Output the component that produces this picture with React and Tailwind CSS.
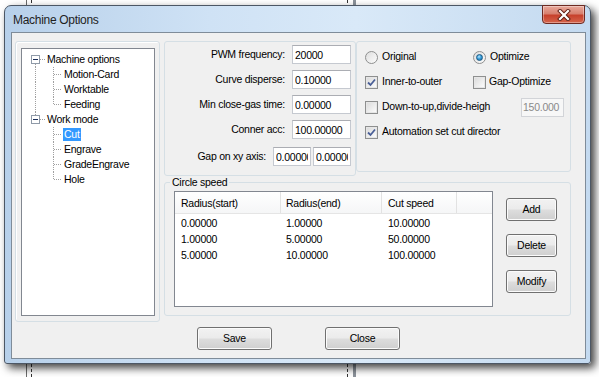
import React from "react";

const tree = [
  { label: "Machine options", root: true, first: true },
  { label: "Motion-Card", cont: true },
  { label: "Worktable", cont: true },
  { label: "Feeding", cont: true, last: true },
  { label: "Work mode", root: true },
  { label: "Cut", selected: true },
  { label: "Engrave" },
  { label: "GradeEngrave" },
  { label: "Hole", last: true },
];

const rows = [
  ["0.00000", "1.00000", "10.00000"],
  ["1.00000", "5.00000", "50.00000"],
  ["5.00000", "10.00000", "100.00000"],
];

const dot = { stroke: "#a0a0a0", strokeDasharray: "1 1", shapeRendering: "crispEdges" };

function Gutter({ item }) {
  if (item.root) {
    return (
      <svg width="24" height="15" className="shrink-0">
        {item.first ? (
          <line x1="13.5" y1="12" x2="13.5" y2="15" {...dot} />
        ) : (
          <line x1="13.5" y1="0" x2="13.5" y2="3" {...dot} />
        )}
        <line x1="18" y1="7.5" x2="23" y2="7.5" {...dot} />
        <rect x="9.5" y="3.5" width="8" height="8" fill="#fff" stroke="#8f9aa8" shapeRendering="crispEdges" />
        <line x1="11" y1="7.5" x2="16" y2="7.5" stroke="#1c2f5a" shapeRendering="crispEdges" />
      </svg>
    );
  }
  return (
    <svg width="41" height="15" className="shrink-0">
      {item.cont && <line x1="13.5" y1="0" x2="13.5" y2="15" {...dot} />}
      <line x1="31.5" y1="0" x2="31.5" y2={item.last ? 8 : 15} {...dot} />
      <line x1="32" y1="7.5" x2="40" y2="7.5" {...dot} />
    </svg>
  );
}

function WinButton({ children, className = "" }) {
  return (
    <div
      className={`flex items-center justify-center rounded-[3px] border border-[#707070] bg-[linear-gradient(to_bottom,#f2f2f2_0%,#ebebeb_48%,#dddddd_52%,#cfcfcf_100%)] shadow-[inset_0_0_0_1px_#fbfbfb] ${className}`}
    >
      {children}
    </div>
  );
}

function Check({ checked }) {
  return (
    <span className="flex h-[13px] w-[13px] shrink-0 items-center justify-center border border-[#8e8f8f] bg-white">
      <span className="flex h-[11px] w-[11px] items-center justify-center border border-[#e6e6e6] bg-[linear-gradient(135deg,#dcdcdc,#fbfbfb)]">
        {checked && (
          <svg width="9" height="9" viewBox="0 0 9 9">
            <path d="M1 4.5 L3.5 7 L8 1.5" fill="none" stroke="#4a5f97" strokeWidth="1.8" />
          </svg>
        )}
      </span>
    </span>
  );
}

function Radio({ checked }) {
  return (
    <span className="flex h-[13px] w-[13px] shrink-0 items-center justify-center rounded-full border border-[#8e8f8f] bg-[linear-gradient(135deg,#dedede,#fcfcfc)]">
      {checked && (
        <span className="h-[7px] w-[7px] rounded-full border border-[#1b5a85] bg-[radial-gradient(circle_at_40%_35%,#b9e6ff_0%,#3aa0dc_45%,#17699f_100%)]" />
      )}
    </span>
  );
}

function Field({ label, value }) {
  return (
    <div className="flex h-[19px] items-center justify-end gap-[7px]">
      <span>{label}</span>
      <input
        readOnly
        value={value}
        className="h-[19px] w-[59px] border border-[#c5c9d0] border-t-[#abadb3] bg-white px-[2px] text-[10.5px] outline-none"
      />
    </div>
  );
}

export default function App() {
  return (
    <div className="relative h-[377px] w-[599px] overflow-hidden bg-white font-['Liberation_Sans',Arial,sans-serif] text-[10.5px] tracking-[-0.25px] text-black">
      {/* desktop lines behind the dialog */}
      <div className="absolute left-[26px] top-0 h-full border-l border-[#6b6b6b]" />
      <div className="absolute left-[31px] top-0 h-full border-l border-dashed border-[#333]" />
      <div className="absolute left-[347px] top-0 h-full border-l border-dashed border-[#333]" />
      <div className="absolute left-[353px] top-0 h-full w-[3px] bg-[#8c939b]" />

      {/* window */}
      <div className="relative ml-[4px] mt-[5px] flex h-[359px] w-[587px] flex-col rounded-t-[7px] rounded-b-[3px] border border-[#4c5765] bg-[linear-gradient(to_right,#b7d0ea_0%,#cfe2f5_35%,#d9e9f8_60%,#c4daf0_100%)] shadow-[4px_4px_9px_rgba(0,0,0,0.75)]">
        {/* title bar */}
        <div className="flex h-[26px] shrink-0 items-start justify-between">
          <span className="mt-[5px] pl-[8px] text-[12px] tracking-[-0.3px] text-[#1e1e1e]">Machine Options</span>
          <div className="mr-[5px] mt-[-1px] flex h-[19px] w-[43px] items-center justify-center rounded-b-[4px] border border-[#6d2a22] bg-[linear-gradient(to_bottom,#e9a99b_0%,#d7806f_45%,#c7412c_55%,#d5654c_100%)] shadow-[inset_0_0_0_1px_rgba(255,255,255,0.35)]">
            <svg width="14" height="12" viewBox="0 0 14 12">
              <path d="M3 2 L11 10 M11 2 L3 10" stroke="#5a1b12" strokeWidth="4" strokeLinecap="square" />
              <path d="M3 2 L11 10 M11 2 L3 10" stroke="#fff" strokeWidth="2.2" strokeLinecap="square" />
            </svg>
          </div>
        </div>

        {/* client area */}
        <div className="ml-[6px] mr-[4px] flex h-[327px] flex-col border border-[#7f8c99] bg-[#f0f0f0]">
          <div className="flex gap-[4px] pl-[3px] pt-[8px]">
            {/* tree group */}
            <div className="h-[281px] w-[145px] rounded-[3px] border border-[#d5dfe5] px-[5px] pt-[6px] shadow-[inset_1px_1px_0_#fff]">
              <div className="h-[268px] w-[134px] border border-[#828790] bg-white pt-[3px]">
                {tree.map((item) => (
                  <div key={item.label} className="flex h-[15px] items-center">
                    <Gutter item={item} />
                    <span
                      className={`h-[13px] px-[1px] leading-[13px] ${item.selected ? "bg-[#3399ff] text-white" : ""}`}
                    >
                      {item.label}
                    </span>
                  </div>
                ))}
              </div>
            </div>

            {/* right side */}
            <div className="flex w-[407px] flex-col">
              <div className="flex items-start">
                <div className="flex h-[135px] w-[192px] flex-col gap-[6px] rounded-[3px] border border-[#d5dfe5] pr-[4px] pt-[3px]">
                  <Field label="PWM frequency:" value="20000" />
                  <Field label="Curve disperse:" value="0.10000" />
                  <Field label="Min close-gas time:" value="0.00000" />
                  <Field label="Conner acc:" value="100.00000" />
                  <div className="mt-[2px] flex h-[19px] items-center justify-end">
                    <span className="mr-[7px]">Gap on xy axis:</span>
                    <input
                      readOnly
                      value="0.00000"
                      className="mr-[2px] h-[19px] w-[38px] border border-[#c5c9d0] border-t-[#abadb3] bg-white px-[2px] text-[10.5px] outline-none"
                    />
                    <input
                      readOnly
                      value="0.00000"
                      className="h-[19px] w-[38px] border border-[#c5c9d0] border-t-[#abadb3] bg-white px-[2px] text-[10.5px] outline-none"
                    />
                  </div>
                </div>

                <div className="flex h-[131px] w-[215px] flex-col gap-[5px] rounded-[3px] border border-[#d5dfe5] pl-[8px] pr-[6px] pt-[5px]">
                  <div className="flex h-[20px] items-center">
                    <span className="flex w-[108px] items-center gap-[2px]">
                      <Radio />
                      <span className="ml-[2px]">Original</span>
                    </span>
                    <span className="flex items-center gap-[2px]">
                      <Radio checked />
                      <span className="ml-[2px]">Optimize</span>
                    </span>
                  </div>
                  <div className="flex h-[20px] items-center">
                    <span className="flex w-[108px] items-center gap-[4px]">
                      <Check checked />
                      <span>Inner-to-outer</span>
                    </span>
                    <span className="flex items-center gap-[2px]">
                      <Check />
                      <span className="ml-[1px]">Gap-Optimize</span>
                    </span>
                  </div>
                  <div className="flex h-[20px] items-center justify-between">
                    <span className="flex items-center gap-[4px]">
                      <Check />
                      <span>Down-to-up,divide-heigh</span>
                    </span>
                    <input
                      readOnly
                      value="150.000"
                      className="h-[19px] w-[43px] border border-[#d2d4d8] bg-[#f7f7f7] px-[1px] text-[10.5px] text-[#8a8a8a] outline-none"
                    />
                  </div>
                  <div className="flex h-[20px] items-center gap-[4px]">
                    <Check checked />
                    <span>Automation set cut director</span>
                  </div>
                </div>
              </div>

              {/* circle speed */}
              <fieldset className="h-[140px] w-[407px] rounded-[3px] border border-[#d5dfe5]">
                <legend className="ml-[5px] px-[2px] leading-[13px]">Circle speed</legend>
                <div className="flex">
                  <div className="ml-[9px] mt-[2px] h-[116px] w-[319px] border border-[#828790] bg-white">
                    <div className="flex h-[22px] items-center border-b border-[#e5e5e5] bg-[linear-gradient(to_bottom,#ffffff,#f5f6f7)]">
                      <span className="h-full w-[106px] border-r border-[#e2e2e2] pl-[6px] leading-[22px]">Radius(start)</span>
                      <span className="h-full w-[101px] border-r border-[#e2e2e2] pl-[5px] leading-[22px]">Radius(end)</span>
                      <span className="h-full w-[75px] border-r border-[#e2e2e2] pl-[6px] leading-[22px]">Cut speed</span>
                    </div>
                    <div className="pt-[2px]">
                      {rows.map((r) => (
                        <div key={r[0]} className="flex h-[16px] items-center">
                          <span className="w-[106px] pl-[6px]">{r[0]}</span>
                          <span className="w-[101px] pl-[5px]">{r[1]}</span>
                          <span className="w-[75px] pl-[6px]">{r[2]}</span>
                        </div>
                      ))}
                    </div>
                  </div>
                  <div className="ml-[13px] mt-[9px] flex flex-col gap-[13px]">
                    <WinButton className="h-[23px] w-[51px]">Add</WinButton>
                    <WinButton className="h-[23px] w-[51px]">Delete</WinButton>
                    <WinButton className="h-[23px] w-[51px]">Modify</WinButton>
                  </div>
                </div>
              </fieldset>
            </div>
          </div>

          <div className="mt-[5px] flex justify-center gap-[53px]">
            <WinButton className="h-[23px] w-[75px]">Save</WinButton>
            <WinButton className="h-[23px] w-[75px]">Close</WinButton>
          </div>
        </div>
      </div>
    </div>
  );
}
